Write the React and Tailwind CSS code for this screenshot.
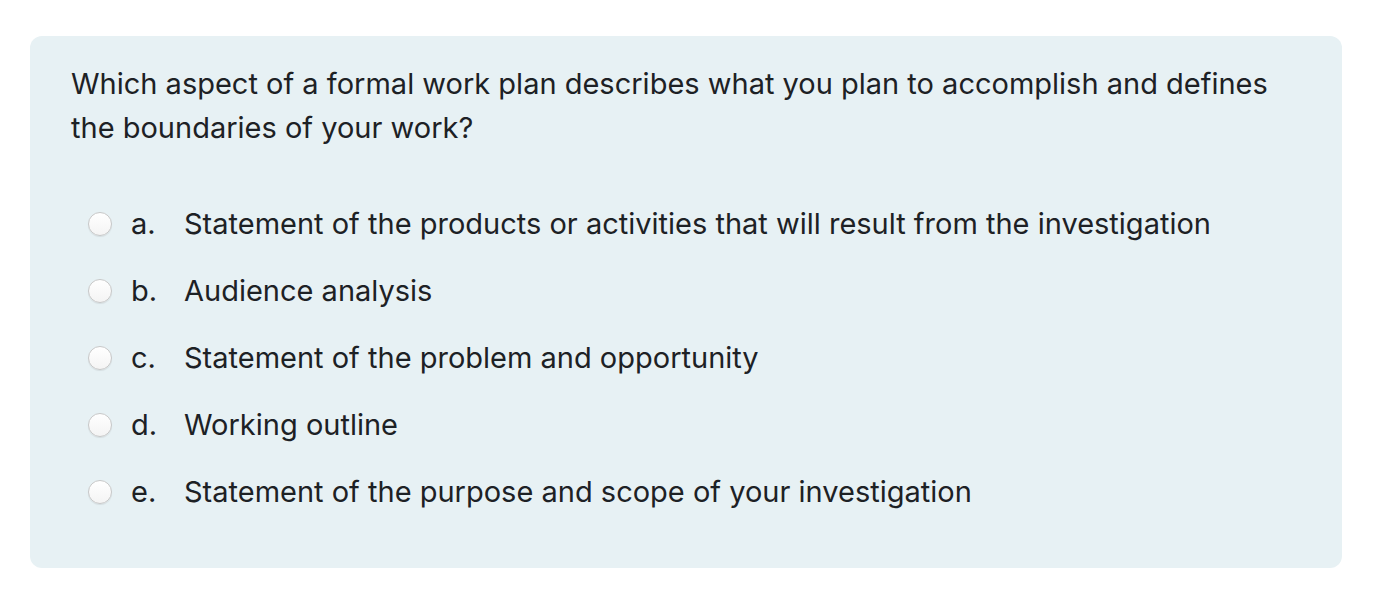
const options = [
  { letter: "a.", text: "Statement of the products or activities that will result from the investigation" },
  { letter: "b.", text: "Audience analysis" },
  { letter: "c.", text: "Statement of the problem and opportunity" },
  { letter: "d.", text: "Working outline" },
  { letter: "e.", text: "Statement of the purpose and scope of your investigation" },
];

function Radio() {
  return (
    <span className="w-6 h-6 rounded-full border border-[#c8c8c8] bg-gradient-to-b from-white to-[#f4f4f4] shadow-[0_1px_1px_rgba(0,0,0,0.08)] shrink-0" />
  );
}

export default function App() {
  return (
    <div className="bg-white min-h-screen pt-9 pl-[30px] pr-[41px] pb-10" style={{ fontFamily: "Inter, 'Noto Sans', sans-serif" }}>
      <div className="bg-[#e7f1f4] rounded-xl pt-[26px] pb-[43px] px-[41px] text-[#1d2125]">
        <p className="text-[29px] leading-[44px]">
          Which aspect of a formal work plan describes what you plan to accomplish and defines the boundaries of your work?
        </p>
        <div className="mt-[40px] flex flex-col">
          {options.map((o) => (
            <label key={o.letter} className="flex items-center h-[67px] pl-[17px] cursor-pointer">
              <Radio />
              <span className="ml-[19px] w-[53px] text-[29px]">{o.letter}</span>
              <span className="text-[29px]">{o.text}</span>
            </label>
          ))}
        </div>
      </div>
    </div>
  );
}
